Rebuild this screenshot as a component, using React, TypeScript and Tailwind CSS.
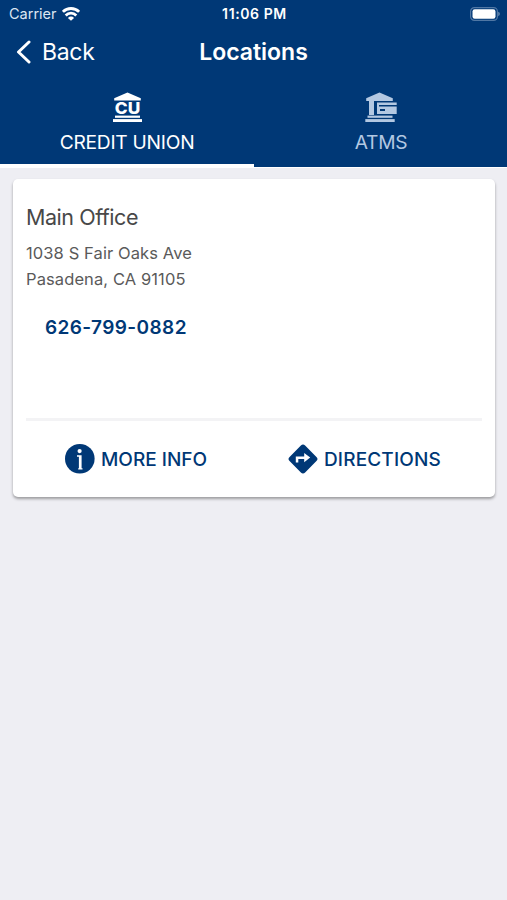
import type { ReactNode } from "react";

const CreditUnionIcon = () => (
  <svg width="30" height="30" viewBox="0 0 30 30" fill="currentColor">
    <path d="M15.5 0.4 28.8 6.2V8.6H2.2V6.2Z" />
    <text x="15.5" y="22" textAnchor="middle" fontFamily="Inter, sans-serif" fontSize="16.5" fontWeight="800" textLength="25.5" lengthAdjust="spacingAndGlyphs">
      CU
    </text>
    <rect x="3" y="23.6" width="25" height="2.2" />
    <rect x="1" y="27.1" width="29" height="2.9" />
  </svg>
);

const AtmIcon = () => (
  <svg width="32" height="30" viewBox="0 0 32 30" fill="currentColor">
    <path d="M14.5 0.4 27.8 6.2V9H1.2V6.2Z" />
    <rect x="4" y="9" width="5" height="14" />
    <path fillRule="evenodd" d="M12 10.6h19.7V22H12zM14 13h17.7v1.5H14zM15 17h5v2h-5z" />
    <rect x="2.5" y="23.6" width="25" height="2.2" />
    <rect x="0.3" y="27.1" width="29.4" height="2.9" />
  </svg>
);

const WifiIcon = () => (
  <svg width="18" height="14" viewBox="0 0 18 14" fill="none" stroke="currentColor" strokeWidth="2.8">
    <path d="M0.9 4.8a11.6 11.6 0 0 1 16.2 0" />
    <path d="M3.7 8.4a7.5 7.5 0 0 1 10.6 0" />
    <path d="M9 13.8 5.9 10.9a4.4 4.4 0 0 1 6.2 0Z" fill="currentColor" stroke="none" />
  </svg>
);

const BatteryIcon = () => (
  <svg width="31" height="14" viewBox="0 0 31 14" fill="none">
    <rect x="1.6" y="0.6" width="26.8" height="12.8" rx="3.8" stroke="#5077a4" strokeWidth="1.2" />
    <rect x="3.5" y="2.2" width="23" height="9.6" rx="2.2" fill="white" />
    <path d="M29.3 4.8a2.4 2.4 0 0 1 0 4.4Z" fill="#7895b8" />
  </svg>
);

const InfoIcon = () => (
  <svg width="30" height="30" viewBox="0 0 30 30">
    <circle cx="14.8" cy="14.8" r="14.8" fill="#003876" />
    <circle cx="14.6" cy="7.1" r="2.1" fill="white" />
    <path d="M12 11.3h4.6v12.9h0.9v1.4h-4.3v-1.4h0.7V12.8H12z" fill="white" />
  </svg>
);

const DirectionsIcon = () => (
  <svg width="30" height="30" viewBox="0 0 30 30">
    <rect x="4" y="4" width="22" height="22" rx="3" transform="rotate(45 15 15)" fill="#003876" />
    <path d="M7.8 18.5v-6.1h8.4V9l6 4.6-6 4.6v-3.3h-5.9v3.6z" fill="white" />
  </svg>
);

const Tab = ({ icon, label, active }: { icon: ReactNode; label: string; active?: boolean }) => (
  <button
    className={
      active
        ? "flex h-full flex-col items-center border-b-3 border-white pt-[15px] text-white"
        : "flex h-full flex-col items-center pt-[15px] pl-px text-[#b3c8e2]"
    }
  >
    {icon}
    <span className="mt-[7px] text-[19.2px] leading-[26px] tracking-[-0.25px]">{label}</span>
  </button>
);

export default function App() {
  return (
    <div className="flex h-[900px] w-[507px] flex-col overflow-hidden bg-[#eeeef3] font-['Inter',sans-serif]">
      <header className="bg-[#003876] text-white">
        <div className="grid h-[27px] grid-cols-3 items-center pr-[7px] pl-[9px]">
          <div className="flex items-center gap-[5px]">
            <span className="text-[14.5px] text-[#dce6f2]">Carrier</span>
            <WifiIcon />
          </div>
          <span className="text-center text-[14px] font-semibold tracking-[0.6px]">11:06 PM</span>
          <div className="flex justify-end">
            <BatteryIcon />
          </div>
        </div>
        <div className="grid h-[50px] grid-cols-3 items-center px-4">
          <button className="flex items-center gap-[11px] text-[23px] tracking-[-0.3px]">
            <svg width="15" height="24" viewBox="0 0 15 24" fill="none" stroke="currentColor" strokeWidth="3" strokeLinecap="round" strokeLinejoin="round">
              <path d="M13 2 2.5 12 13 22" />
            </svg>
            <span>Back</span>
          </button>
          <h1 className="text-center text-[23px] font-semibold">Locations</h1>
        </div>
        <nav className="grid h-[90px] grid-cols-[254px_1fr]">
          <Tab icon={<CreditUnionIcon />} label="CREDIT UNION" active />
          <Tab icon={<AtmIcon />} label="ATMS" />
        </nav>
      </header>

      <main className="border-t border-white pt-[11px] pr-3 pl-[13px]">
        <section className="flex h-[318px] flex-col rounded-[5px] bg-white px-[13px] shadow-[0_2px_3px_rgba(0,0,0,0.35)]">
          <h2 className="mt-[23px] text-[21.5px] leading-[30px] tracking-[-0.45px] text-[#484848]">Main Office</h2>
          <address className="mt-[8px] text-[16.5px] leading-[26px] tracking-[0.1px] text-[#5a5a5a] not-italic">
            <div>1038 S Fair Oaks Ave</div>
            <div>Pasadena, CA 91105</div>
          </address>
          <a className="mt-[23px] ml-[19px] text-[19px] leading-[26px] font-semibold tracking-[0.4px] text-[#003876]">626-799-0882</a>
          <div className="mt-auto grid h-[79px] grid-cols-2 border-t-3 border-[#f3f3f5]">
            <button className="flex items-center gap-[6px] pl-[39px] text-[19px] font-medium text-[#003876]">
              <InfoIcon />
              <span className="pt-[2px]">MORE INFO</span>
            </button>
            <button className="flex items-center gap-[6px] pl-[34px] text-[19px] font-medium tracking-[0.15px] text-[#003876]">
              <DirectionsIcon />
              <span className="pt-[2px]">DIRECTIONS</span>
            </button>
          </div>
        </section>
      </main>
    </div>
  );
}
